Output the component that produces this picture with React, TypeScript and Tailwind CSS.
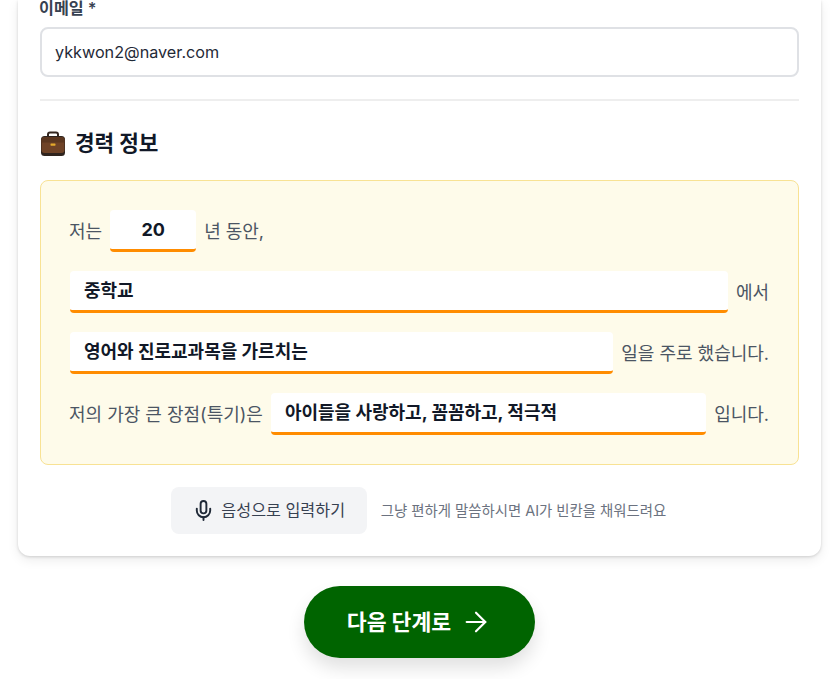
import { Mic, ArrowRight } from "lucide-react";

const FONT = "font-['Inter','Noto_Sans_CJK_KR',sans-serif]";

function Blank({ value, className }: { value: string; className: string }) {
  return (
    <div
      className={`h-[42px] flex items-center bg-white rounded-[4px] border-b-[3px] border-[#ff8c00] text-[18px] font-bold text-[#111827] ${className}`}
    >
      {value}
    </div>
  );
}

function Briefcase() {
  return (
    <svg width="26" height="26" viewBox="0 0 26 26" className="shrink-0">
      <path d="M8 6V3.500C8 2.400 8.900 1.500 10 1.500h6c1.100 0 2 .9 2 2V6" fill="none" stroke="#33261f" strokeWidth="2" />
      <rect x="1" y="5" width="24" height="20" rx="3.500" fill="#2f241e" />
      <rect x="1.500" y="6" width="23" height="16" rx="3" fill="#6f4327" />
      <path d="M1.500 9c0-1.700 1.300-3 3-3h17c1.700 0 3 1.300 3 3v2.500h-23z" fill="#5b3720" />
      <rect x="10.500" y="12.500" width="5" height="2.200" rx="0.600" fill="#e3aa2c" />
    </svg>
  );
}

export default function App() {
  return (
    <div className={`${FONT} h-[679px] overflow-hidden bg-white flex flex-col items-center`}>
      <div className="w-[803px] shrink-0 bg-white rounded-b-xl shadow-[0_1px_3px_rgba(0,0,0,0.15),0_4px_12px_rgba(0,0,0,0.08)] px-[22px] pb-[22px]">
        <div className="h-[16px] mb-[11px] -ml-px flex items-center text-[16.200px] font-semibold text-[#374151]">이메일 *</div>
        <div className="h-[50px] flex items-center pl-[13px] pr-[14px] pt-px bg-white border-2 border-[#dfe1e5] rounded-lg text-[16.200px] text-[#1f2937]">
          ykkwon2@naver.com
        </div>
        <div className="h-[2px] mt-[22px] bg-[#eeeeee]" />
        <div className="mt-[30px] h-[26px] flex items-center gap-[9px] text-[21.300px] font-bold text-[#111827]">
          <Briefcase />
          <span>경력 정보</span>
        </div>
        <div className="mt-[23px] bg-[#fefbea] border border-[#f8e294] rounded-lg px-[29px] py-[29px] flex flex-col gap-[19px] text-[18px] text-[#4b5563]">
          <div className="flex items-center gap-[8px]">
            <span className="-ml-px">저는</span>
            <Blank value="20" className="w-[86px] justify-center" />
            <span>년 동안,</span>
          </div>
          <div className="flex items-center gap-[8px]">
            <Blank value="중학교" className="flex-1 px-[14px]" />
            <span>에서</span>
          </div>
          <div className="flex items-center gap-[8px]">
            <Blank value="영어와 진로교과목을 가르치는" className="flex-1 px-[14px]" />
            <span>일을 주로 했습니다.</span>
          </div>
          <div className="flex items-center gap-[8px]">
            <span className="-ml-px">저의 가장 큰 장점(특기)은</span>
            <Blank value="아이들을 사랑하고, 꼼꼼하고, 적극적" className="flex-1 px-[14px]" />
            <span>입니다.</span>
          </div>
        </div>
        <div className="mt-[22px] pr-[2px] flex items-center justify-center gap-[14px]">
          <div className="w-[196px] h-[47px] rounded-lg bg-[#f3f4f6] flex items-center justify-center gap-[6px] text-[16.200px] text-[#374151]">
            <Mic size={23} strokeWidth={2} className="text-[#1f2937]" />
            <span>음성으로 입력하기</span>
          </div>
          <span className="text-[14.400px] text-[#6b7280]">그냥 편하게 말씀하시면 AI가 빈칸을 채워드려요</span>
        </div>
      </div>
      <div className="mt-[30px] w-[231px] h-[72px] shrink-0 rounded-full bg-[#006400] text-white shadow-[0_10px_18px_rgba(0,0,0,0.12)] flex items-center justify-center gap-[9px] text-[21.600px] font-bold">
        <span>다음 단계로</span>
        <ArrowRight size={32} strokeWidth={1.600} />
      </div>
    </div>
  );
}
